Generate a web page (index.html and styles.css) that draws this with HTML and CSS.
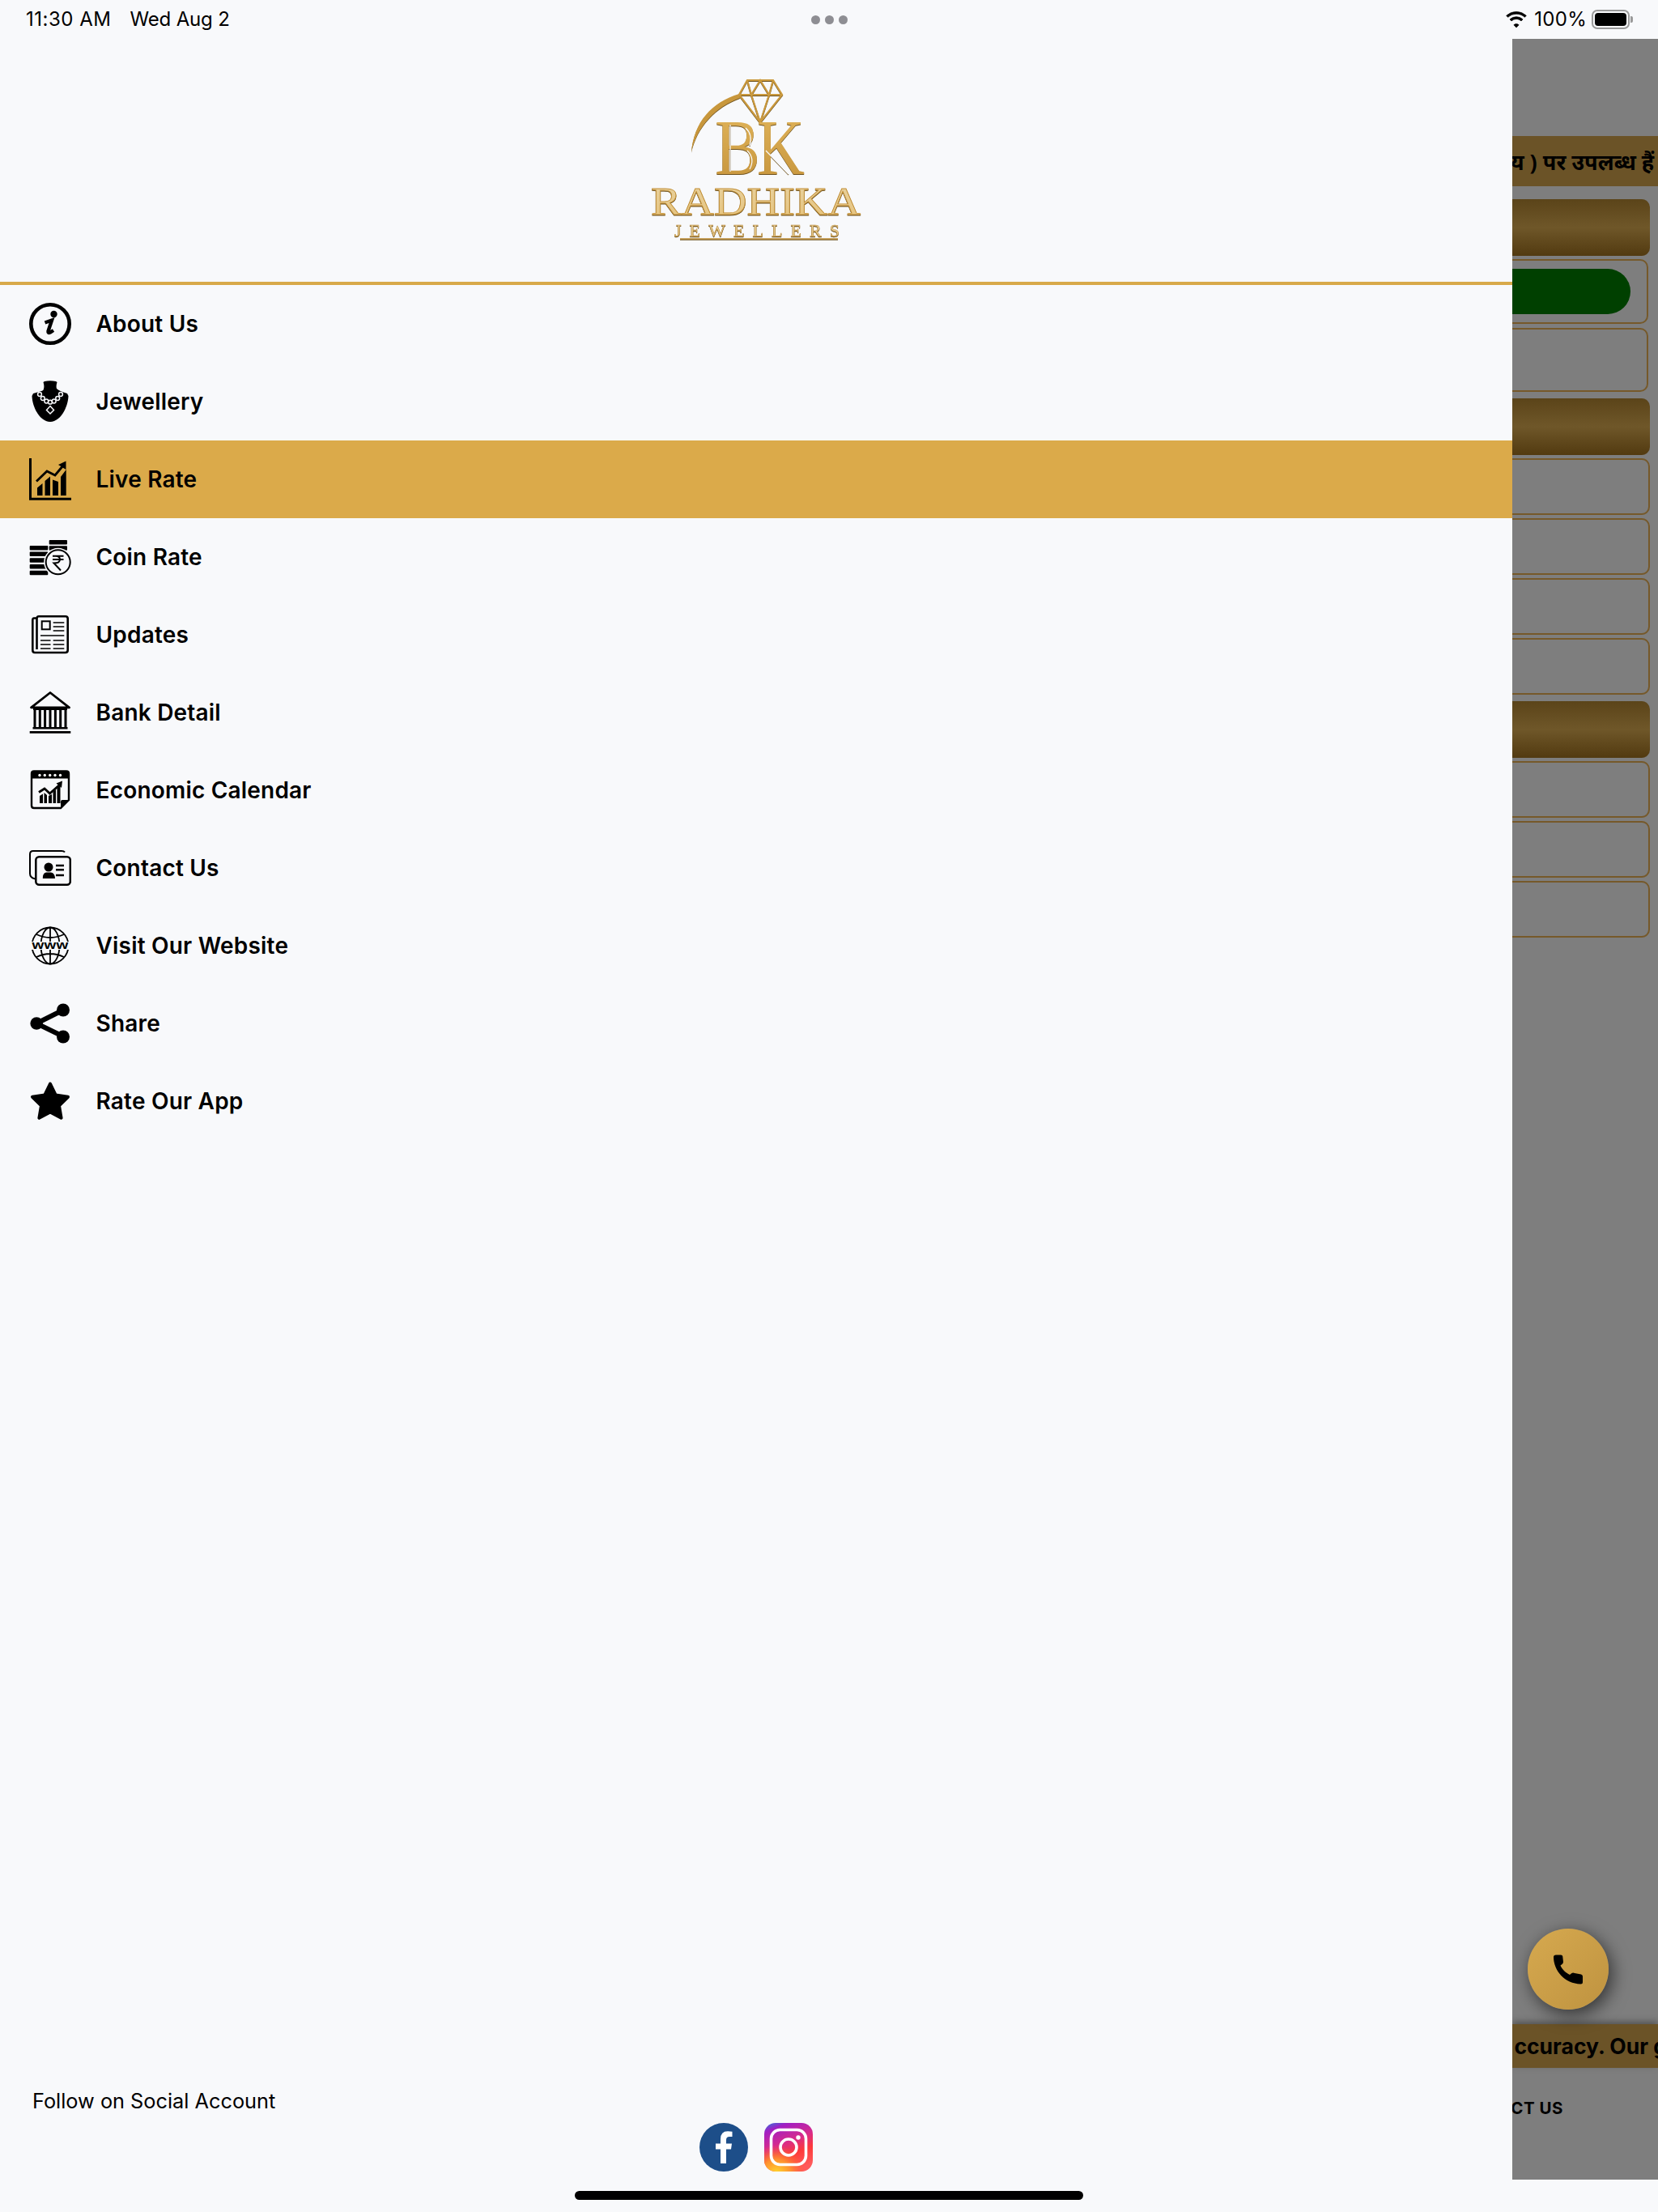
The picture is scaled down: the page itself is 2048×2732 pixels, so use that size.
FILE: index.html
```html
<!DOCTYPE html>
<html lang="en">
<head>
<meta charset="utf-8">
<title>BK Radhika Jewellers</title>
<link rel="stylesheet" href="styles.css">
</head>
<body>
<div class="page">
  <header class="status">
    <div class="status-left"><span class="status-time">11:30 AM</span><span class="status-date">Wed Aug 2</span></div>
    <div class="status-dots"><i></i><i></i><i></i></div>
    <div class="status-right">
      <svg class="wifi" viewBox="0 0 28 20"><path d="M14 3.2c4 0 7.6 1.5 10.4 4.1l1.9-2A18 18 0 0 0 14 .4 18 18 0 0 0 1.700 5.300l1.900 2A15 15 0 0 1 14 3.200z"/><path d="M14 9.500c2.300 0 4.400.9 6 2.400l2-2a11.600 11.600 0 0 0-16 0l2 2a8.700 8.700 0 0 1 6-2.400z"/><path d="M14 15.600c-1.200 0-2.300.5-3.100 1.200L14 20l3.100-3.200a4.500 4.500 0 0 0-3.100-1.200z"/></svg>
      <span class="status-pct">100%</span>
      <div class="battery"><div class="battery-fill"></div></div>
      <div class="battery-cap"></div>
    </div>
  </header>

  <div class="stage">
    <nav class="drawer">
      <div class="brand">
        <svg class="logo" viewBox="0 0 270 204">
          <defs>
            <linearGradient id="gold" x1="0" y1="0" x2="0" y2="1"><stop offset="0" stop-color="#e2b65c"/><stop offset="1" stop-color="#c4923a"/></linearGradient>
            <linearGradient id="pale" x1="0" y1="0" x2="0" y2="1"><stop offset="0" stop-color="#e8d3a2"/><stop offset="1" stop-color="#e6c27a"/></linearGradient>
          </defs>
          <g fill="none" stroke="#cb9a3e" stroke-width="2.200" stroke-linejoin="miter">
            <path d="M124 3H156L167 21L140 55L114 21Z"/>
            <path d="M114 21H167M124 3L129 21L140 3L151 21L156 3M129 21L140 55L151 21"/>
          </g>
          <path class="logo-arc" d="M114 20C80 30 58 55 55 92C62 60 85 36 115 25Z"/>
          <text class="logo-bk" x="84" y="119" textLength="56" lengthAdjust="spacingAndGlyphs">B</text>
          <text class="logo-bk" x="136" y="119" textLength="59" lengthAdjust="spacingAndGlyphs">K</text>
          <path class="logo-inline" d="M103 58V116M147 90L175 119M122 62Q131 70 127 84M124 90Q134 100 127 113"/>
          <text class="logo-name" x="5" y="169" textLength="259" lengthAdjust="spacingAndGlyphs">RADHIKA</text>
          <text class="logo-sub" x="34" y="196" textLength="204" lengthAdjust="spacing">JEWELLERS</text>
          <path d="M41 199H236" stroke="#bd8c36" stroke-width="1.600"/>
        </svg>
      </div>

      <ul class="menu">
        <li class="menu-item">
          <svg class="ico" viewBox="0 0 52 52"><circle cx="26" cy="26" r="23.700" fill="none" stroke="#000" stroke-width="4.600"/><circle cx="30.500" cy="14" r="4.200"/><path d="M19.500 24.500L28 21.500L23.500 35Q23 38 26 36.500L30 34" fill="none" stroke="#000" stroke-width="4.400"/></svg>
          <span>About Us</span>
        </li>
        <li class="menu-item">
          <svg class="ico" viewBox="0 0 52 52"><path d="M19 1Q26-.5 33 1L34.500 2Q33 7 34 10Q37 13 47 16L48.500 19C48 34 38 51 26 51C14 51 4 34 3.500 19L5 16C15 13 18 13 18 10Q19 7 17.500 2Z"/><g fill="#000" stroke="#f8f9fb" stroke-width="1.500"><circle cx="13" cy="17" r="2.400"/><circle cx="16.800" cy="22" r="2.400"/><circle cx="21.300" cy="25.500" r="2.400"/><circle cx="26" cy="26.700" r="2.400"/><circle cx="30.700" cy="25.500" r="2.400"/><circle cx="35.200" cy="22" r="2.400"/><circle cx="39" cy="17" r="2.400"/><path d="M26 31.500L30.500 36.500L26 41L21.500 36.500Z"/></g></svg>
          <span>Jewellery</span>
        </li>
        <li class="menu-item is-active">
          <svg class="ico" viewBox="0 0 52 52"><path d="M1.500 0V50.200H52" fill="none" stroke="#000" stroke-width="3"/><path d="M10 36.500L16.500 31V46H10ZM19.500 28L26 22.500V46H19.500ZM29 26.500L36 29V46H29ZM39 23L45.700 14V46H39Z"/><path d="M9 28.500L22 16L32 21L42 9" fill="none" stroke="#000" stroke-width="2.800"/><path d="M45.500 3.500V14L36 8Z"/></svg>
          <span>Live Rate</span>
        </li>
        <li class="menu-item">
          <svg class="ico" viewBox="0 0 52 52"><rect x=".7" y="12" width="22.600" height="5.500" rx="1"/><rect x=".7" y="19.500" width="22.600" height="5.500" rx="1"/><rect x=".7" y="27.300" width="22.600" height="5.500" rx="1"/><rect x=".7" y="35" width="22.600" height="5.500" rx="1"/><rect x=".7" y="42.700" width="22.600" height="5.500" rx="1"/><rect x="24.700" y="5" width="22.300" height="5.500" rx="1"/><rect x="24.700" y="12.300" width="22.300" height="5.500" rx="1"/><circle cx="35.700" cy="32.300" r="17.500" fill="#f8f9fb"/><circle cx="35.700" cy="32.300" r="15" fill="none" stroke="#000" stroke-width="2"/><path d="M29 24.800H42.500M29 29H42.500M30 24.800H33Q38 25 38 29Q38 33.500 30.500 33.500L39 42.500" fill="none" stroke="#000" stroke-width="2"/></svg>
          <span>Coin Rate</span>
        </li>
        <li class="menu-item">
          <svg class="ico" viewBox="0 0 52 52"><path d="M9.500 5.500H5.800Q4.300 5.500 4.300 8V45Q4.300 48 7 48H44.700Q47.700 48 47.700 45V6Q47.700 3.300 44.700 3.300H12Q9.500 3.300 9.500 6V44" fill="none" stroke="#000" stroke-width="2.600"/><rect x="15.700" y="9.300" width="10" height="10" fill="none" stroke="#000" stroke-width="2"/><path d="M29.700 11H43.300M29.700 16H43.300M29.700 21H43.300M14 27H43.300M14 33H26.500M29.700 33H43.300M14 38H26.500M29.700 38H43.300M14 43H26.500M29.700 43H43.300" fill="none" stroke="#000" stroke-width="1.700"/></svg>
          <span>Updates</span>
        </li>
        <li class="menu-item">
          <svg class="ico" viewBox="0 0 52 52"><path d="M26 1.500L49.500 19.800H2.500Z" fill="none" stroke="#000" stroke-width="2.800" stroke-linejoin="round"/><path d="M5 20.500H47V23H5ZM4.500 44H47.500V46.500H4.500ZM.7 49H51.300V51.800H.7Z"/><path d="M7 23V44M13.300 23V44M19.600 23V44M26 23V44M32.400 23V44M38.700 23V44M45 23V44" stroke="#000" stroke-width="3"/></svg>
          <span>Bank Detail</span>
        </li>
        <li class="menu-item">
          <svg class="ico" viewBox="0 0 52 52"><path d="M6 2.500H46Q49 2.500 49 5.500V38L39 48H6Q3 48 3 45V5.500Q3 2.500 6 2.500Z" fill="none" stroke="#000" stroke-width="2.400"/><path d="M6 2.500H46Q49 2.500 49 5.500V11.500H3V5.500Q3 2.500 6 2.500ZM49 38H41Q39 38 39 40V48Z"/><g fill="#fff"><circle cx="13" cy="7.500" r="1.700"/><circle cx="19.300" cy="7.500" r="1.700"/><circle cx="25.700" cy="7.500" r="1.700"/><circle cx="32" cy="7.500" r="1.700"/><circle cx="38.500" cy="7.500" r="1.700"/></g><path d="M13 33L17 30.500V42H13ZM18.500 29L22 32V42H18.500ZM24 33L28 31V42H24ZM29.500 28L33 25V42H29.500ZM34.500 23L38.500 20V42H34.500Z"/><path d="M12 28.500L19 24L25.500 30L38 19" fill="none" stroke="#000" stroke-width="2.800"/><path d="M41 14.500L40 23L33.500 17.500Z"/></svg>
          <span>Economic Calendar</span>
        </li>
        <li class="menu-item">
          <svg class="ico" viewBox="0 0 52 52"><path d="M44 6.500Q43 5 40 5H5Q1 5 1 9V33Q1 38 7.500 39.500" fill="none" stroke="#000" stroke-width="2"/><rect x="8.300" y="12.300" width="42.500" height="34.500" rx="4" fill="none" stroke="#000" stroke-width="2.500"/><circle cx="24" cy="25" r="5.500"/><path d="M16.800 39Q16.500 32.500 21 31.500H27Q32 32.500 32 39Z"/><path d="M33 23H43M33 28.300H43M33 35H43" stroke="#000" stroke-width="2.400"/></svg>
          <span>Contact Us</span>
        </li>
        <li class="menu-item">
          <svg class="ico" viewBox="0 0 52 52"><g fill="none" stroke="#000" stroke-width="1.800"><circle cx="26" cy="26" r="22.500"/><ellipse cx="26" cy="26" rx="11.500" ry="22.500"/><path d="M26 3.500V48.500M9 12Q26 20 43 12M9 40Q26 32 43 40"/></g><rect x="2" y="21" width="48" height="10" fill="#f8f9fb"/><text class="www" x="26" y="29.700" textLength="45" lengthAdjust="spacingAndGlyphs">www</text></svg>
          <span>Visit Our Website</span>
        </li>
        <li class="menu-item">
          <svg class="ico" viewBox="0 0 52 52"><path d="M42 9.500L9 26L42 42" fill="none" stroke="#000" stroke-width="6"/><circle cx="9.200" cy="26" r="7.800"/><circle cx="42" cy="9.500" r="8"/><circle cx="42" cy="42.500" r="8"/></svg>
          <span>Share</span>
        </li>
        <li class="menu-item">
          <svg class="ico" viewBox="0 0 52 52"><path d="M26 4.500L32.800 18.500L48 20.700L37 31.500L39.600 46.800L26 39.500L12.400 46.800L15 31.500L4 20.700L19.200 18.500Z" stroke="#000" stroke-width="4" stroke-linejoin="round"/></svg>
          <span>Rate Our App</span>
        </li>
      </ul>

      <div class="social">
        <p class="social-title">Follow on Social Account</p>
        <div class="social-icons">
          <svg class="social-ico" viewBox="0 0 60 60"><circle cx="30" cy="30" r="30" fill="#1d4e89"/><path d="M33 50V32.500H39L40 25.500H33V21Q33 17 37 17H40.500V10.800Q38 10.300 35 10.300Q26 10.300 26 20V25.500H20V32.500H26V50Z" fill="#fff"/></svg>
          <svg class="social-ico" viewBox="0 0 60 60">
            <defs>
              <linearGradient id="ig" x1=".15" y1="0" x2=".55" y2="1"><stop offset="0" stop-color="#4f5fd6"/><stop offset=".12" stop-color="#a11fc4"/><stop offset=".45" stop-color="#d92b8a"/><stop offset=".7" stop-color="#fd3a3a"/><stop offset="1" stop-color="#ff5a5a"/></linearGradient>
              <radialGradient id="igy" cx=".25" cy="1.050" r=".6"><stop offset="0" stop-color="#ffdd2d"/><stop offset=".5" stop-color="#ff9a2d" stop-opacity=".9"/><stop offset="1" stop-color="#ff5a2d" stop-opacity="0"/></radialGradient>
            </defs>
            <rect width="60" height="60" rx="14" fill="url(#ig)"/>
            <rect width="60" height="60" rx="14" fill="url(#igy)"/>
            <rect x="8.500" y="8.500" width="43" height="43" rx="11" fill="none" stroke="#fff" stroke-width="3.600"/>
            <circle cx="30" cy="30" r="10" fill="none" stroke="#fff" stroke-width="3.600"/>
            <circle cx="42" cy="18" r="2.700" fill="#fff"/>
          </svg>
        </div>
      </div>
    </nav>

    <section class="backdrop">
      <div class="ticker ticker-top"><span lang="hi">य ) पर उपलब्ध हैं ।</span></div>
      <div class="rate-head rate-head-first"></div>
      <div class="rate-box rate-box-tall rate-box-narrow"><div class="pill"></div></div>
      <div class="rate-box rate-box-tall rate-box-narrow"></div>
      <div class="rate-head"></div>
      <div class="rate-box"></div>
      <div class="rate-box"></div>
      <div class="rate-box"></div>
      <div class="rate-box"></div>
      <div class="rate-head"></div>
      <div class="rate-box"></div>
      <div class="rate-box"></div>
      <div class="rate-box"></div>
      <div class="tail">
        <div class="ticker ticker-bottom"><span>ccuracy. Our g</span></div>
        <div class="contact-line"><span>CT US</span></div>
      </div>
      <div class="fab">
        <svg class="fab-ico" viewBox="0 0 36 37"><path d="M3 .5H9Q11 .5 11.200 2L12 9Q12 11 10.500 12L8.500 13.500C10.500 18 14 22 20 25L22.500 23Q24 22 26 23L34 24.500Q36 25 36 27V34Q36 36.500 33.500 36.500C14 36 0 20 0 3Q0 .5 3 .5Z"/></svg>
      </div>
    </section>
  </div>

  <div class="home"><div class="home-bar"></div></div>
</div>
</body>
</html>
```

FILE: styles.css
```css
* { box-sizing: border-box; }
html, body { margin: 0; padding: 0; }
body {
  background: #f8f9fb;
  color: #000;
  font-family: Inter, "Noto Sans", "Liberation Sans", sans-serif;
}
.page { width: 2048px; height: 2732px; display: flex; flex-direction: column; overflow: hidden; }

/* status bar */
.status {
  height: 48px; flex: none; padding: 0 31px 0 32px;
  display: grid; grid-template-columns: 1fr auto 1fr; align-items: center;
  font-size: 24px; line-height: 48px;
}
.status-left { display: flex; gap: 23px; }
.status-time { letter-spacing: .5px; }
.status-date { letter-spacing: -.15px; }
.status-pct { letter-spacing: .3px; }
.status-dots { display: flex; gap: 6px; }
.status-dots i { width: 11px; height: 11px; border-radius: 50%; background: #8e8e93; }
.status-right { display: flex; align-items: center; justify-content: flex-end; }
.wifi { width: 28px; height: 20px; margin-right: 8px; stroke: #000; stroke-width: .7px; }
.battery { width: 47px; height: 24px; margin-left: 6px; border: 2px solid #9a9a9a; border-radius: 7px; padding: 2px; }
.battery-fill { height: 100%; background: #000; border-radius: 4px; }
.battery-cap { width: 3px; height: 8px; margin-left: 1px; background: #9a9a9a; border-radius: 0 2px 2px 0; }

/* layout */
.stage { height: 2644px; flex: none; display: flex; }
.drawer { width: 1868px; flex: none; display: flex; flex-direction: column; background: #f8f9fb; }

/* brand */
.brand { height: 304px; flex: none; display: flex; align-items: center; justify-content: center; border-bottom: 4px solid #d8a94a; }
.logo { width: 270px; height: 204px; filter: drop-shadow(0 1px 0 #6f5320); }
.logo-arc { fill: #c8973c; }
.logo-bk { font-family: "Liberation Serif", serif; font-size: 97px; fill: url(#gold); }
.logo-inline { fill: none; stroke: #f8f9fb; stroke-width: 1.2px; }
.logo-name { font-family: "Liberation Serif", serif; font-size: 48px; fill: url(#pale); stroke: #c4923a; stroke-width: .8px; }
.logo-sub { font-family: "Liberation Serif", serif; font-size: 22px; fill: url(#pale); stroke: #b98a38; stroke-width: .4px; }

/* menu */
.menu { list-style: none; margin: 0; padding: 0; }
.menu-item {
  height: 96px; padding-left: 36px;
  display: flex; align-items: center; gap: 30.500px;
  font-size: 28px; font-weight: 600; letter-spacing: .2px;
}
.is-active { background: #dbaa4a; }
.ico { width: 52px; height: 52px; flex: none; }
.www { font-family: "Liberation Sans", sans-serif; font-size: 15px; font-weight: 700; text-anchor: middle; }

/* social */
.social { margin-top: auto; padding-bottom: 10px; }
.social-title { margin: 0 0 11px 40px; font-size: 25.300px; line-height: 32px; }
.social-icons { display: flex; justify-content: center; gap: 20px; }
.social-ico { width: 60px; height: 60px; }

/* dimmed page behind the drawer */
.backdrop { position: relative; flex: 1; min-width: 0; overflow: hidden; display: flex; flex-direction: column; background: #7e7e7e; padding-top: 120px; }
.ticker { display: flex; justify-content: flex-end; align-items: center; background: #6b5327; white-space: nowrap; font-weight: 700; }
.ticker-top { height: 62px; font-size: 27px; font-family: "Noto Sans", Inter, sans-serif; }
.ticker-top span { margin-right: -13px; }
.rate-head {
  height: 70px; margin: 8px 10px 0 -20px; border-radius: 10px;
  background: linear-gradient(#5b4419, #6f5729 50%, #523a10);
}
.rate-head-first { margin-top: 16px; }
.rate-box { height: 70px; margin: 4px 10px 0 -20px; border: 2px solid #76592a; border-radius: 10px; display: flex; align-items: center; justify-content: flex-end; }
.rate-box-tall { height: 79.500px; margin-top: 5px; }
.rate-box-narrow { margin-right: 12px; }
.rate-head + .rate-box-tall { margin-top: 4px; }
.pill { width: 150px; height: 56px; margin-right: 20px; border-radius: 0 28px 28px 0; background: #004000; }
.tail { margin-top: auto; }
.ticker-bottom { height: 54px; font-size: 26.500px; box-shadow: 0 -3px 8px rgba(0,0,0,.35); }
.ticker-bottom span { margin-right: -11px; }
.contact-line { height: 138px; display: flex; justify-content: flex-end; padding: 38px 117px 0 0; font-size: 20.500px; font-weight: 700; line-height: 24px; letter-spacing: .5px; white-space: nowrap; }
.fab {
  position: absolute; right: 61px; bottom: 210px;
  width: 100px; height: 100px; border-radius: 50%;
  display: flex; align-items: center; justify-content: center;
  background: linear-gradient(135deg, #d6a94f, #bf9340);
  box-shadow: 4px 6px 22px rgba(0,0,0,.6);
}
.fab-ico { width: 36px; height: 37px; }

/* home indicator */
.home { flex: 1; display: flex; justify-content: center; padding-top: 14px; }
.home-bar { width: 628px; height: 11px; border-radius: 6px; background: #000; }
```
